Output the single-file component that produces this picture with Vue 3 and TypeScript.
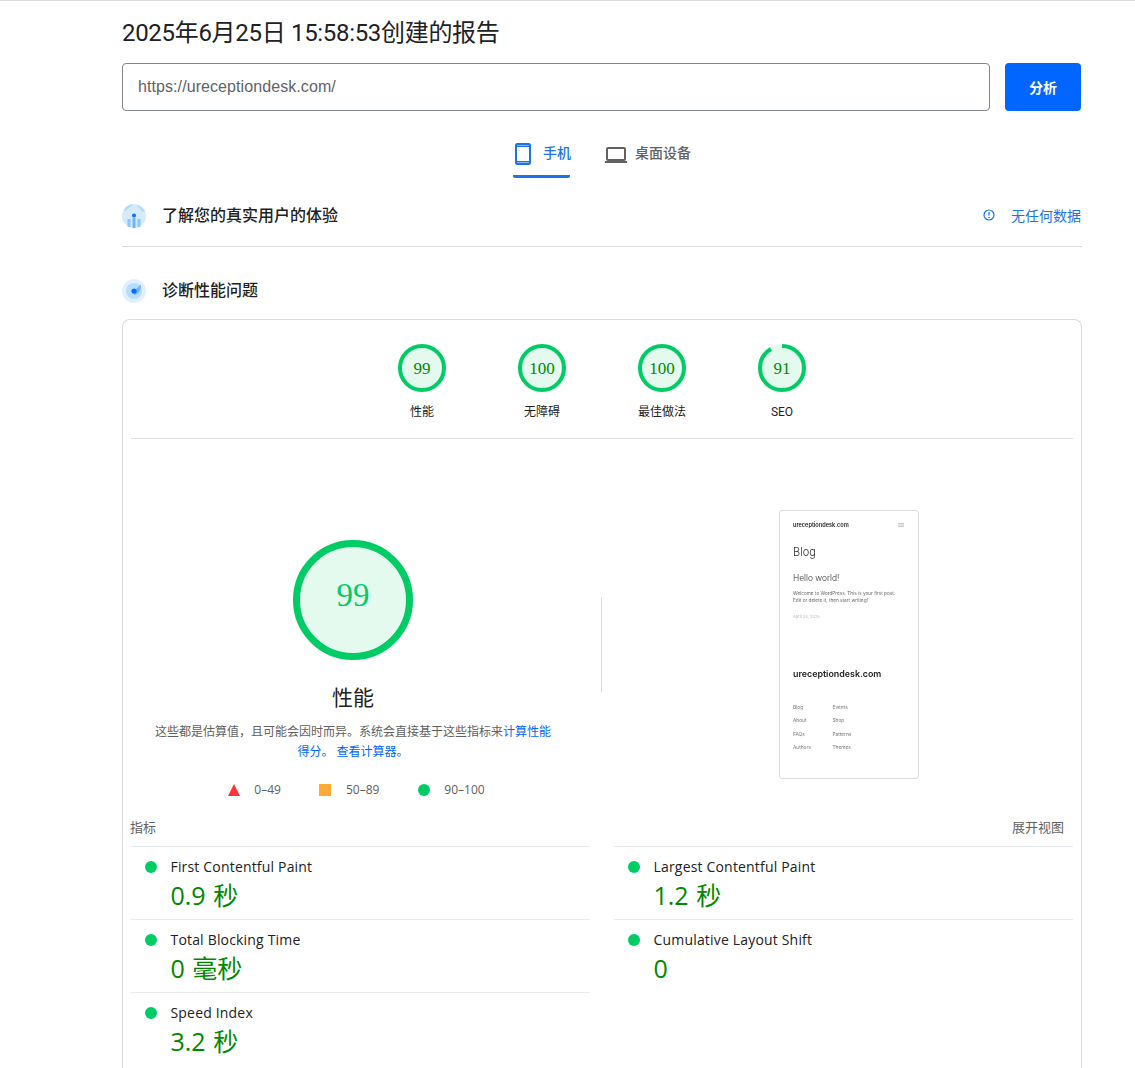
<script setup lang="ts">
interface Score { value: number; label: string }
interface Metric { name: string; value: string }

const scores: Score[] = [
  { value: 99, label: '性能' },
  { value: 100, label: '无障碍' },
  { value: 100, label: '最佳做法' },
  { value: 91, label: 'SEO' },
]
const leftMetrics: Metric[] = [
  { name: 'First Contentful Paint', value: '0.9 秒' },
  { name: 'Total Blocking Time', value: '0 毫秒' },
  { name: 'Speed Index', value: '3.2 秒' },
]
const rightMetrics: Metric[] = [
  { name: 'Largest Contentful Paint', value: '1.2 秒' },
  { name: 'Cumulative Layout Shift', value: '0' },
]
const footerLinks: [string, string][] = [
  ['Blog', 'Events'],
  ['About', 'Shop'],
  ['FAQs', 'Patterns'],
  ['Authors', 'Themes'],
]
const radius = 22
const circ = 2 * Math.PI * radius
const bigRadius = 56.5
const bigCirc = 2 * Math.PI * bigRadius
const dash = (v: number, c: number) => `${((v >= 99 ? 100 : v) / 100) * c} ${c}`
</script>

<template>
  <div class="page">
    <div class="wrap">
      <h1 class="title">2025年6月25日 15:58:53创建的报告</h1>

      <div class="search">
        <div class="input">https://ureceptiondesk.com/</div>
        <button class="analyze">分析</button>
      </div>

      <div class="tabs">
        <div class="tab active">
          <svg width="16" height="22" viewBox="0 0 16 22" class="phone">
            <rect x="1" y="1" width="14" height="20" rx="1.5" fill="none" stroke="currentColor" stroke-width="2" />
            <path d="M1 3.2h14M1 18.8h14" stroke="currentColor" stroke-width="1.4" />
          </svg>
          <span class="tab-text">手机</span>
        </div>
        <div class="tab">
          <svg width="22" height="16" viewBox="0 0 22 16" class="laptop">
            <rect x="2" y="1" width="18" height="12" rx="1" fill="none" stroke="currentColor" stroke-width="2" />
            <path d="M0 15h22" stroke="currentColor" stroke-width="2" />
          </svg>
          <span class="tab-text">桌面设备</span>
        </div>
      </div>

      <div class="section first">
        <svg class="sec-icon" width="24" height="24" viewBox="0 0 24 24">
          <circle cx="12" cy="12" r="12" fill="#d6eaff" />
          <path d="M3 4a12 12 0 0 1 8-4c-1 2-2 3-4 4s-3 3-5 3z" fill="#b4d9ff" />
          <path d="M15 1a12 12 0 0 1 8 7c-3 0-4-1-5-3s-3-2-3-4z" fill="#b4d9ff" />
          <rect x="5.5" y="15" width="3" height="8" fill="#8cc8ff" />
          <rect x="10.5" y="14" width="3" height="10" fill="#6ab7ff" />
          <rect x="15.5" y="15" width="3" height="8" fill="#8cc8ff" />
          <circle cx="12" cy="11.5" r="2" fill="#0a6cff" />
        </svg>
        <span class="sec-text">了解您的真实用户的体验</span>
        <div class="nodata">
          <svg width="12" height="12" viewBox="0 0 12 12">
            <circle cx="6" cy="6" r="5" fill="none" stroke="currentColor" stroke-width="1.2" />
            <path d="M6 3v3.6" stroke="currentColor" stroke-width="1.3" />
            <circle cx="6" cy="8.5" r=".8" fill="currentColor" />
          </svg>
          <span>无任何数据</span>
        </div>
      </div>

      <div class="section second">
        <svg class="sec-icon" width="24" height="24" viewBox="0 0 24 24">
          <circle cx="12" cy="12" r="12" fill="#e1f0ff" />
          <circle cx="12" cy="12" r="8" fill="#b8dcff" />
          <path d="M12 12L19 5.3c0 6-2 10-7 10.7z" fill="#6ab7ff" />
          <circle cx="12" cy="12" r="2.6" fill="#0a6cff" />
        </svg>
        <span class="sec-text">诊断性能问题</span>
      </div>

      <div class="card">
        <div class="scores">
          <div v-for="s in scores" :key="s.label" class="score">
            <div class="gauge">
              <svg width="48" height="48" viewBox="0 0 48 48">
                <circle cx="24" cy="24" r="24" fill="#e5faef" />
                <circle
                  cx="24" cy="24" :r="radius" fill="none" stroke="#00cc66" stroke-width="4"
                  :stroke-dasharray="dash(s.value, circ)" transform="rotate(-90 24 24)"
                />
              </svg>
              <span class="gauge-num">{{ s.value }}</span>
            </div>
            <div class="score-label">{{ s.label }}</div>
          </div>
        </div>

        <div class="main">
          <div class="perf">
            <div class="big-gauge">
              <svg width="120" height="120" viewBox="0 0 120 120">
                <circle cx="60" cy="60" r="60" fill="#e5faef" />
                <circle
                  cx="60" cy="60" :r="bigRadius" fill="none" stroke="#00cc66" stroke-width="7"
                  :stroke-dasharray="dash(99, bigCirc)" transform="rotate(-90 60 60)"
                />
              </svg>
              <span class="big-num">99</span>
            </div>
            <div class="perf-title">性能</div>
            <p class="perf-desc">这些都是估算值&#xFF0C;且可能会因时而异。系统会直接基于这些指标来<a class="link">计算性能得分。</a> <a class="link">查看计算器。</a></p>
            <div class="legend">
              <span class="lg-item lg-red"><i class="tri"></i>0–49</span>
              <span class="lg-item lg-orange"><i class="sq"></i>50–89</span>
              <span class="lg-item"><i class="dot-lg"></i>90–100</span>
            </div>
          </div>
          <div class="vsep"></div>
          <div class="shot">
            <div class="shot-head">
              <span class="shot-site">ureceptiondesk.com</span>
              <svg width="6" height="4" viewBox="0 0 6 4"><path d="M0 .5h6M0 2h6M0 3.5h6" stroke="#aaa" stroke-width=".6" /></svg>
            </div>
            <div class="shot-blog">Blog</div>
            <div class="shot-hello">Hello world!</div>
            <div class="shot-body">Welcome to WordPress. This is your first post.<br />Edit or delete it, then start writing!</div>
            <div class="shot-date">April 24, 2025</div>
            <div class="shot-foot">ureceptiondesk.com</div>
            <div class="shot-links">
              <template v-for="row in footerLinks" :key="row[0]">
                <span>{{ row[0] }}</span><span>{{ row[1] }}</span>
              </template>
            </div>
          </div>
        </div>

        <div class="metrics-head">
          <span>指标</span>
          <span class="expand">展开视图</span>
        </div>
        <div class="metrics">
          <div class="col">
            <div v-for="m in leftMetrics" :key="m.name" class="metric">
              <i class="dot"></i>
              <div>
                <div class="m-name">{{ m.name }}</div>
                <div class="m-value">{{ m.value }}</div>
              </div>
            </div>
          </div>
          <div class="col">
            <div v-for="m in rightMetrics" :key="m.name" class="metric">
              <i class="dot"></i>
              <div>
                <div class="m-name">{{ m.name }}</div>
                <div class="m-value">{{ m.value }}</div>
              </div>
            </div>
          </div>
        </div>
      </div>
    </div>
  </div>
</template>

<style scoped>
.page {
  height: 1068px;
  overflow: hidden;
  border-top: 1px solid #dadce0;
  box-sizing: border-box;
  background: #fff;
  font-family: "Roboto", "Noto Sans CJK SC", sans-serif;
  color: #202124;
}
.wrap { width: 960px; margin-left: 122px; }
.title {
  margin: 0;
  padding-top: 16px;
  font-size: 24px;
  line-height: 32px;
  font-weight: 400;
  letter-spacing: -.31px;
}
.search { display: flex; gap: 15px; margin-top: 14px; width: 959px; }
.input {
  flex: 1;
  height: 48px;
  box-sizing: border-box;
  border: 1px solid #80868b;
  border-radius: 4px;
  padding: 0 15px;
  line-height: 45px;
  font-family: "Liberation Sans", sans-serif;
  font-size: 16px;
  letter-spacing: .08px;
  color: #5f6368;
}
.analyze {
  width: 76px;
  height: 48px;
  border: 0;
  border-radius: 4px;
  background: #0066ff;
  color: #fff;
  font-family: inherit;
  font-size: 14px;
  font-weight: 700;
}
.tabs { display: flex; margin-top: 19px; height: 48px; margin-left: 391px; }
.tab {
  display: flex;
  align-items: center;
  height: 48px;
  box-sizing: border-box;
  font-size: 14px;
  font-weight: 500;
  color: #616161;
}
.tab svg { flex: none; }
.tab-text { position: relative; top: -2px; }
.tab.active {
  color: #1a73e8;
  border-bottom: 3px solid #1a73e8;
  border-radius: 0 0 2px 2px;
  padding: 3px 0 0 2px;
  width: 57px;
  margin-right: 35px;
  white-space: nowrap;
}
.tab.active .tab-text { flex: none; }
.phone { margin-right: 12px; }
.laptop { margin-right: 8px; }
.tab:not(.active) svg { margin-top: 1px; }
.section { display: flex; align-items: center; }
.first { padding: 26px 0 18px; border-bottom: 1px solid #dadce0; }
.second { padding: 32px 0 16px; }
.sec-icon { flex: none; margin-right: 16px; }
.sec-text { font-size: 16px; font-weight: 500; color: #212121; line-height: 24px; }
.nodata {
  margin-left: auto;
  margin-right: 1px;
  display: flex;
  align-items: center;
  gap: 16px;
  color: #1a73e8;
  font-size: 14px;
  position: relative;
  top: -1px;
}
.card {
  border: 1px solid #dadce0;
  border-bottom: 0;
  border-radius: 8px 8px 0 0;
  padding: 0 8px 40px;
}
.scores {
  display: flex;
  justify-content: center;
  padding: 24px 0 18px;
  border-bottom: 1px solid #dadce0;
}
.score { width: 120px; display: flex; flex-direction: column; align-items: center; }
.gauge { position: relative; width: 48px; height: 48px; }
.gauge svg { display: block; }
.gauge-num {
  position: absolute;
  inset: 0;
  display: flex;
  align-items: center;
  justify-content: center;
  padding-top: 1px;
  box-sizing: border-box;
  font-family: "Liberation Serif", serif;
  font-size: 17px;
  color: #008800;
}
.score-label {
  margin-top: 12px;
  font-size: 12px;
  line-height: 16px;
  color: #212121;
}
.main { display: flex; align-items: flex-start; }
.perf {
  width: 444px;
  margin-top: 100.5px;
  display: flex;
  flex-direction: column;
  align-items: center;
}
.big-gauge { position: relative; width: 120px; height: 120px; }
.big-gauge svg { display: block; }
.big-num {
  position: absolute;
  inset: 0;
  display: flex;
  align-items: center;
  justify-content: center;
  padding-bottom: 8px;
  box-sizing: border-box;
  font-family: "Liberation Serif", serif;
  font-size: 33px;
  color: #00cc66;
}
.perf-title { margin-top: 24.5px; font-size: 21px; line-height: 28px; color: #212121; }
.perf-desc {
  margin: 10px 0 0;
  width: 400px;
  text-align: center;
  font-size: 12px;
  line-height: 20px;
  color: #616161;
}
.link { color: #0067ff; }
.legend {
  display: flex;
  margin-top: 20px;
  height: 16px;
  align-items: center;
  font-family: "Open Sans", sans-serif;
  font-size: 12px;
  color: #616161;
  line-height: 16px;
  margin-left: 7px;
}
.lg-item { display: flex; align-items: center; }
.lg-red { margin-right: 38px; }
.lg-orange { margin-right: 39px; }
.tri {
  width: 0; height: 0;
  border-left: 6px solid transparent;
  border-right: 6px solid transparent;
  border-bottom: 12px solid #ff3333;
  margin-right: 14px;
}
.sq { width: 12px; height: 12px; background: #ffaa33; margin-right: 15px; }
.dot-lg { width: 12px; height: 12px; border-radius: 50%; background: #00cc66; margin-right: 14px; }
.vsep { width: 1px; height: 95px; background: #dadce0; margin: 158px 0 0 26px; }
.shot {
  width: 140px;
  height: 269px;
  box-sizing: border-box;
  margin: 71px 0 0 177px;
  border: 1px solid #dadce0;
  border-radius: 3px;
  padding: 10px 14px 0 13px;
  font-family: "Inter", sans-serif;
  color: #222;
  overflow: hidden;
}
.shot > * { filter: blur(.35px); }
.shot-head { display: flex; justify-content: space-between; align-items: center; height: 8px; }
.shot-site { font-size: 5.6px; font-weight: 600; }
.shot-blog { margin-top: 16px; font-size: 11px; line-height: 14px; font-weight: 300; color: #333; }
.shot-hello { margin-top: 14px; font-size: 8.4px; line-height: 10px; font-weight: 300; color: #333; }
.shot-body { margin-top: 7px; font-size: 4.7px; line-height: 7px; color: #666; white-space: nowrap; }
.shot-date { margin-top: 9px; font-size: 4px; line-height: 7px; color: #bbb; }
.shot-foot { margin-top: 48px; font-size: 8.9px; font-weight: 600; line-height: 12px; }
.shot-links {
  margin-top: 21px;
  display: grid;
  grid-template-columns: 39.5px 1fr;
  grid-auto-rows: 13.3px;
  font-size: 4.8px;
  line-height: 13px;
  color: #777;
}
.metrics-head {
  display: flex;
  justify-content: space-between;
  margin: 22px 0 0 -1px;
  padding: 0 9px 10px 0;
  font-size: 13px;
  line-height: 16px;
  color: #616161;
}
.metrics { display: flex; justify-content: space-between; }
.col { width: 459px; }
.metric {
  display: flex;
  height: 73px;
  box-sizing: border-box;
  border-top: 1px solid #e8eaed;
  padding: 10px 0 0 14px;
  font-family: "Open Sans", "Noto Sans CJK SC", sans-serif;
}
.dot {
  flex: none;
  width: 12px;
  height: 12px;
  border-radius: 50%;
  background: #00cc66;
  margin: 4px 13.5px 0 0;
}
.m-name { font-size: 14px; line-height: 20px; color: #212121; letter-spacing: .18px; }
.m-value { font-size: 25px; line-height: 36px; color: #008800; word-spacing: 1px; }
</style>
